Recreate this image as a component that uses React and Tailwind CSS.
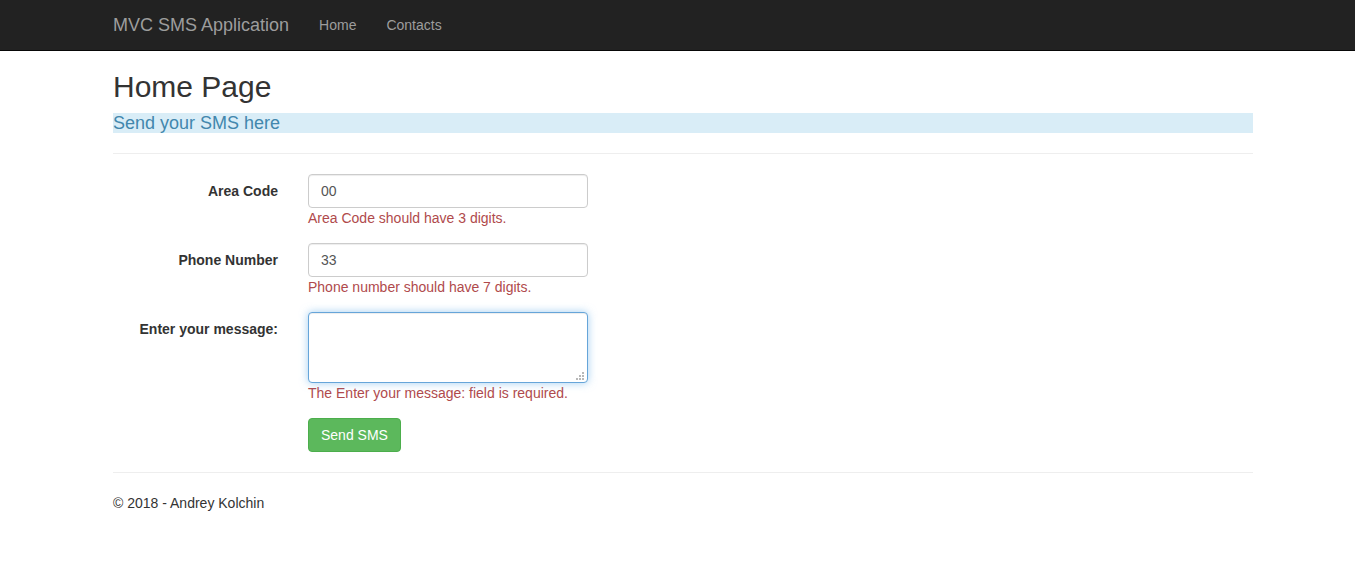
import React, { useState } from "react";

const controlClass =
  "block w-full rounded border border-[#ccc] bg-white px-3 py-1.5 text-sm leading-5 text-[#555] shadow-[inset_0_1px_1px_rgba(0,0,0,0.075)] outline-none";

function Field({ id, label, error, children }) {
  return (
    <div className="mb-[15px] grid grid-cols-1 sm:grid-cols-6 sm:gap-x-[30px]">
      <label htmlFor={id} className="pt-[7px] font-bold sm:text-right">
        {label}
      </label>
      <div className="sm:col-span-5">
        <div className="relative max-w-[280px]">{children}</div>
        <span className="block text-[#b04a4c]">{error}</span>
      </div>
    </div>
  );
}

function ResizeGrip() {
  return (
    <svg
      aria-hidden="true"
      width="8"
      height="8"
      viewBox="0 0 8 8"
      fill="#b8b8b8"
      shapeRendering="crispEdges"
      className="pointer-events-none absolute right-1 bottom-[3px]"
    >
      <rect x="6" y="0" width="2" height="2" />
      <rect x="3" y="3" width="2" height="2" />
      <rect x="6" y="3" width="2" height="2" />
      <rect x="0" y="6" width="2" height="2" />
      <rect x="3" y="6" width="2" height="2" />
      <rect x="6" y="6" width="2" height="2" />
    </svg>
  );
}

export default function App() {
  const [areaCode, setAreaCode] = useState("00");
  const [phone, setPhone] = useState("33");
  const [message, setMessage] = useState("");

  return (
    <div className="font-['Liberation_Sans',Arial,sans-serif] text-sm leading-5 text-[#333]">
      <header className="border-b border-[#080808] bg-[#222] lg:pl-[11px]">
        <nav className="mx-auto flex max-w-[1170px] items-center px-[15px] text-[#9d9d9d]">
          <a href="#top" className="py-[15px] pr-[15px] text-lg leading-5">
            MVC SMS Application
          </a>
          <a href="#home" className="p-[15px]">
            Home
          </a>
          <a href="#contacts" className="p-[15px]">
            Contacts
          </a>
        </nav>
      </header>

      <div className="lg:pl-[11px]">
        <div className="mx-auto max-w-[1170px] px-[15px]">
          <main>
            <h2 className="mt-[19px] mb-[10px] text-[30px] leading-[33px] font-medium">
              Home Page
            </h2>
            <form onSubmit={(event) => event.preventDefault()}>
              <h4 className="bg-[#d9edf7] text-lg leading-5 font-medium text-[#4287ad]">
                Send your SMS here
              </h4>
              <hr className="my-5 border-[#eee]" />
              <Field id="area" label="Area Code" error="Area Code should have 3 digits.">
                <input
                  id="area"
                  type="text"
                  value={areaCode}
                  onChange={(event) => setAreaCode(event.target.value)}
                  className={controlClass}
                />
              </Field>
              <Field id="phone" label="Phone Number" error="Phone number should have 7 digits.">
                <input
                  id="phone"
                  type="text"
                  value={phone}
                  onChange={(event) => setPhone(event.target.value)}
                  className={controlClass}
                />
              </Field>
              <Field
                id="message"
                label="Enter your message:"
                error="The Enter your message: field is required."
              >
                <textarea
                  id="message"
                  value={message}
                  onChange={(event) => setMessage(event.target.value)}
                  className="block h-[71px] w-full resize-none rounded border border-[#66a5d9] bg-white px-3 py-1.5 text-sm leading-5 text-[#555] shadow-[inset_0_1px_1px_rgba(0,0,0,0.075),0_0_8px_rgba(102,175,233,0.6)] outline-none"
                />
                <ResizeGrip />
              </Field>
              <div className="grid grid-cols-1 sm:grid-cols-6 sm:gap-x-[30px]">
                <div className="sm:col-span-5 sm:col-start-2">
                  <button
                    type="submit"
                    className="rounded border border-[#4cae4c] bg-[#5cb85c] px-3 py-1.5 text-white"
                  >
                    Send SMS
                  </button>
                </div>
              </div>
            </form>
          </main>
          <hr className="my-5 border-[#eee]" />
          <footer>
            <p>© 2018 - Andrey Kolchin</p>
          </footer>
        </div>
      </div>
    </div>
  );
}
